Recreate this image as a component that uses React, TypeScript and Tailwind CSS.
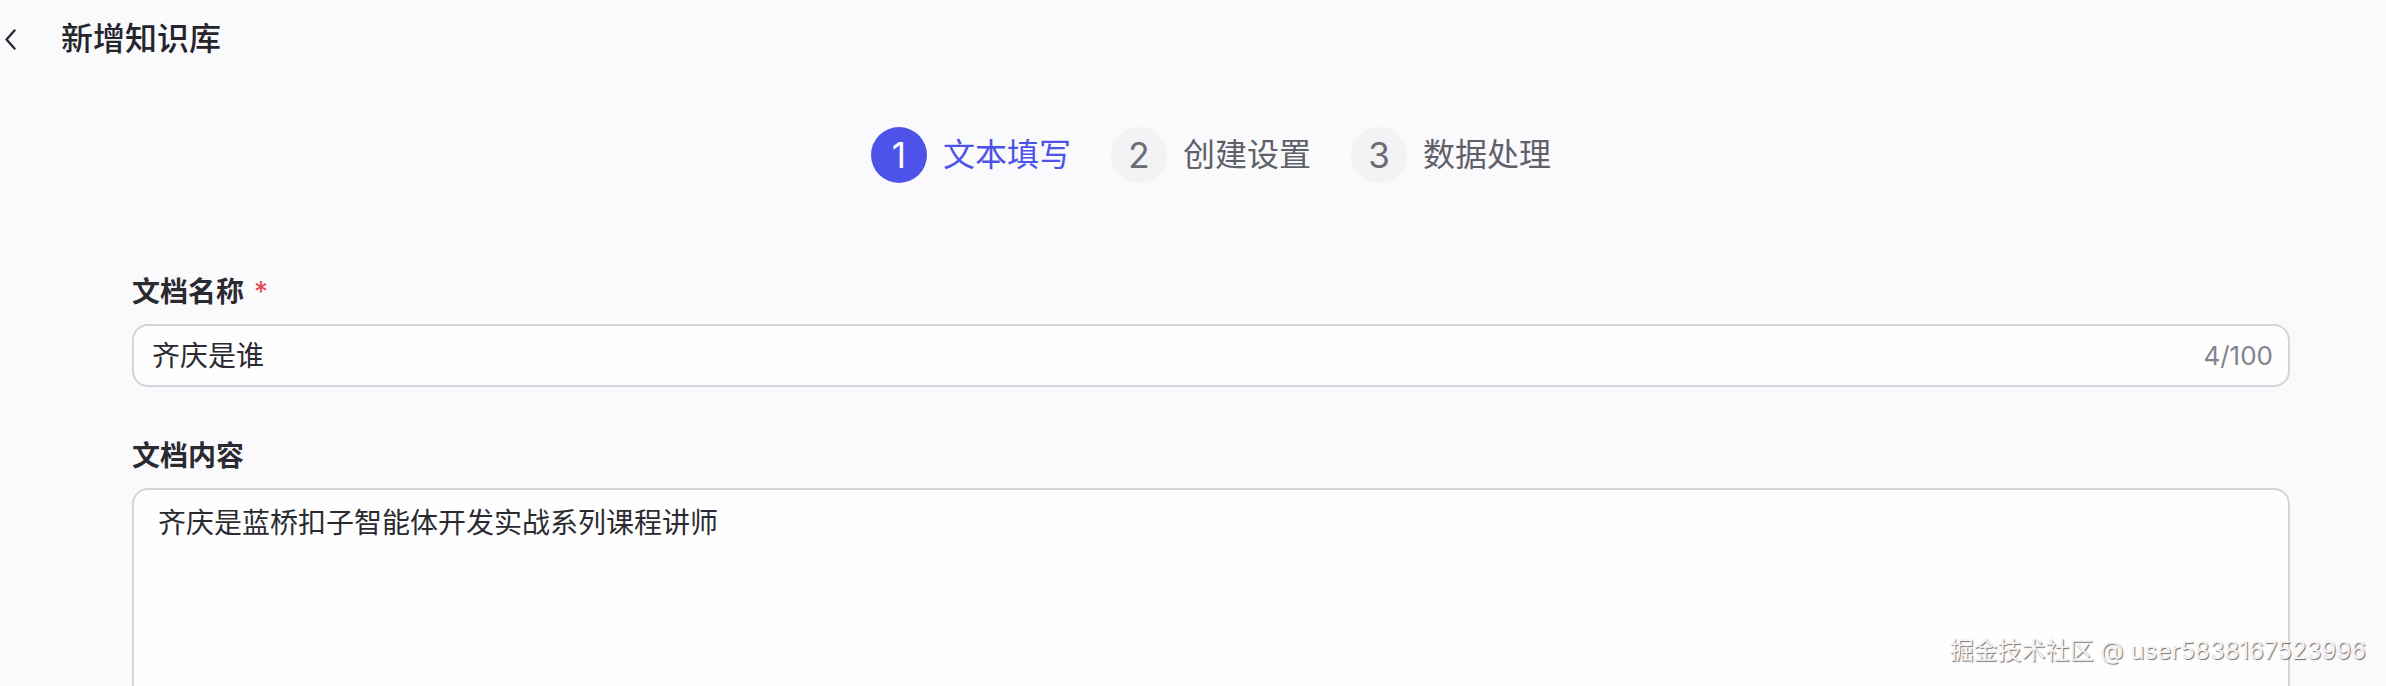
import React from 'react';

const steps = [
  { n: 1, label: '文本填写', active: true },
  { n: 2, label: '创建设置', active: false },
  { n: 3, label: '数据处理', active: false },
];

function Step({ n, label, active }: { n: number; label: string; active: boolean }) {
  return (
    <div className="flex items-center gap-[16px]">
      <div
        className={
          active
            ? 'w-[56px] h-[56px] rounded-full flex items-center justify-center bg-[#4d53e8] text-white text-[35px]'
            : 'w-[56px] h-[56px] rounded-full flex items-center justify-center bg-[#f3f3f6] text-[#6b6c75] text-[35px]'
        }
      >
        {n}
      </div>
      <span
        className={
          active
            ? 'text-[32px] leading-[40px] text-[#4d53e8]'
            : 'text-[32px] leading-[40px] text-[#5f6068]'
        }
      >
        {label}
      </span>
    </div>
  );
}

export default function App() {
  return (
    <div
      className="relative w-full h-screen bg-[#fafafd] overflow-hidden text-[#1d1c23]"
      style={{ fontFamily: 'Inter, "Noto Sans CJK SC", sans-serif' }}
    >
      {/* header */}
      <div className="flex items-center h-[78px] pl-[5px]">
        <svg width="11" height="21" viewBox="0 0 11 21" fill="none">
          <path d="M9.5 1.5L1.5 10.5L9.5 19.5" stroke="#2a2a30" strokeWidth="2.4" strokeLinecap="round" strokeLinejoin="round" />
        </svg>
        <h1 className="ml-[45px] text-[32px] leading-[40px] font-medium text-[#26252c]">新增知识库</h1>
      </div>

      <div className="pl-[132px] pr-[96px]">
        {/* steps */}
        <div className="flex justify-center gap-[40px] mt-[49px]">
          {steps.map((s) => (
            <Step key={s.n} {...s} />
          ))}
        </div>

        {/* form */}
        <div className="mt-[89px] flex items-center h-[40px] text-[28px] font-semibold text-[#2b2a31]">
          文档名称
          <span className="ml-[10px] text-[#e5484d] font-normal">*</span>
        </div>
        <div className="mt-[12px] h-[63px] flex items-center justify-between rounded-[16px] border-2 border-[#d4d4da] bg-[#fefeff] pl-[18px] pr-[15px]">
          <span className="text-[28px] leading-[40px] text-[#2b2a31]">齐庆是谁</span>
          <span className="text-[26px] text-[#82838c]">4/100</span>
        </div>

        <div className="mt-[49px] flex items-center h-[40px] text-[28px] font-semibold text-[#2b2a31]">文档内容</div>
        <div className="mt-[12px] h-[260px] rounded-[16px] border-2 border-[#d4d4da] bg-[#fefeff] pl-[24px] pt-[13px]">
          <p className="text-[28px] leading-[40px] text-[#2b2a31]">齐庆是蓝桥扣子智能体开发实战系列课程讲师</p>
        </div>
      </div>

      <div className="absolute right-[20px] bottom-[19px] text-[24px] leading-[32px] text-[#f4f4f6] [text-shadow:1px_1px_1px_rgba(0,0,0,0.55)]">
        掘金技术社区 @ user5838167523996
      </div>
    </div>
  );
}
